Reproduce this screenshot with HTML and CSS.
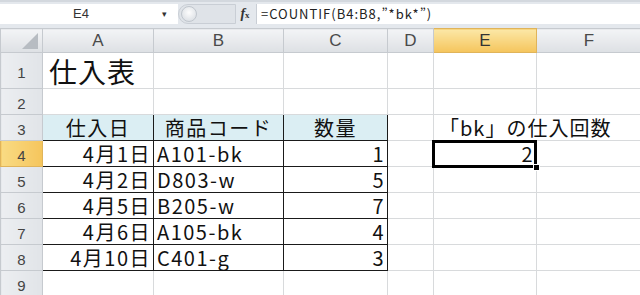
FILE: index.html
```html
<!DOCTYPE html>
<html lang="ja">
<head>
<meta charset="UTF-8" />
<title>仕入表</title>
<link rel="stylesheet" href="styles.css">
</head>
<body>
  <div class="formula-bar">
    <div class="name-box">E4</div>
    <div class="name-arrow">&#9662;</div>
    <div class="capsule"><span class="knob"></span></div>
    <div class="fx"><i>f</i><small>x</small></div>
    <div class="formula">=COUNTIF(B4:B8,”*bk*”)</div>
  </div>

  <table class="sheet">
    <colgroup>
      <col class="c-hd"><col class="c-a"><col class="c-b"><col class="c-c"><col class="c-d"><col class="c-e"><col class="c-f">
    </colgroup>
    <tr class="col-head">
      <th class="corner"><span class="tri"></span></th>
      <th>A</th><th>B</th><th>C</th><th>D</th><th class="active">E</th><th>F</th>
    </tr>
    <tr class="r1">
      <th class="row-head">1</th>
      <td class="title">仕入表</td><td></td><td></td><td></td><td></td><td></td>
    </tr>
    <tr>
      <th class="row-head">2</th>
      <td></td><td></td><td></td><td></td><td></td><td></td>
    </tr>
    <tr>
      <th class="row-head">3</th>
      <td class="box head">仕入日</td><td class="box head">商品コード</td><td class="box head">数量</td>
      <td></td><td class="label" colspan="2">「bk」の仕入回数</td>
    </tr>
    <tr>
      <th class="row-head active">4</th>
      <td class="box num">4月1日</td><td class="box">A101-bk</td><td class="box num">1</td>
      <td></td><td class="num selected">2<span class="frame"></span><span class="handle"></span></td><td></td>
    </tr>
    <tr>
      <th class="row-head">5</th>
      <td class="box num">4月2日</td><td class="box">D803-w</td><td class="box num">5</td>
      <td></td><td></td><td></td>
    </tr>
    <tr>
      <th class="row-head">6</th>
      <td class="box num">4月5日</td><td class="box">B205-w</td><td class="box num">7</td>
      <td></td><td></td><td></td>
    </tr>
    <tr>
      <th class="row-head">7</th>
      <td class="box num">4月6日</td><td class="box">A105-bk</td><td class="box num">4</td>
      <td></td><td></td><td></td>
    </tr>
    <tr>
      <th class="row-head">8</th>
      <td class="box num">4月10日</td><td class="box">C401-g</td><td class="box num">3</td>
      <td></td><td></td><td></td>
    </tr>
    <tr>
      <th class="row-head">9</th>
      <td></td><td></td><td></td><td></td><td></td><td></td>
    </tr>
  </table>
</body>
</html>
```

FILE: styles.css
```css
* {
  box-sizing: border-box;
}
html, body {
  margin: 0;
  padding: 0;
  width: 640px;
  height: 295px;
  overflow: hidden;
  background: #fff;
  font-family: "Noto Sans CJK JP", "Noto Sans", sans-serif;
  color: #111;
}

/* Formula bar */
.formula-bar {
  display: flex;
  align-items: center;
  height: 28px;
  padding: 3px 0 5px 0;
  background: #e4e8ed;
  border-top: 2px solid #d3d8de;
}
.name-box {
  width: 162px;
  height: 20px;
  background: #fff;
  font-family: "Liberation Sans", sans-serif;
  font-size: 13px;
  line-height: 20px;
  color: #333;
  padding-left: 73px;
}
.name-arrow {
  width: 16px;
  height: 20px;
  background: #fff;
  font-size: 9px;
  line-height: 20px;
  color: #333;
}
.capsule {
  display: flex;
  align-items: center;
  width: 58px;
  height: 20px;
  background: #dfe3e8;
  border: 1px solid #c9ced5;
  border-radius: 10px 0 0 10px;
}
.knob {
  width: 16px;
  height: 16px;
  margin-left: 2px;
  border-radius: 50%;
  background: radial-gradient(circle at 50% 40%, #fdfdfd, #d4d9df);
  border: 1px solid #c0c6cd;
}
.fx {
  width: 18px;
  height: 20px;
  font-family: "Liberation Serif", serif;
  font-weight: bold;
  font-size: 14px;
  line-height: 20px;
  color: #333;
  text-align: center;
}
.fx small {
  font-size: 9px;
}
.formula {
  flex: 1;
  height: 20px;
  margin-left: 2px;
  background: #fff;
  border-left: 1px solid #c9ced5;
  font-size: 13px;
  line-height: 20px;
  letter-spacing: 1px;
  padding-left: 4px;
  color: #222;
  white-space: nowrap;
}

/* Sheet */
.sheet {
  border-collapse: collapse;
  table-layout: fixed;
  width: 641px;
}
.c-hd { width: 42px; }
.c-a { width: 111px; }
.c-b { width: 130px; }
.c-c { width: 104px; }
.c-d { width: 46px; }
.c-e { width: 103px; }
.c-f { width: 105px; }

.sheet td, .sheet th {
  border: 1px solid #d8dadc;
  padding: 0 3px;
  white-space: nowrap;
  overflow: visible;
  font-weight: normal;
}
.sheet tr {
  height: 26px;
}
.sheet tr.col-head {
  height: 24px;
}
.sheet tr.r1 {
  height: 36px;
}
.col-head th {
  background: linear-gradient(#f3f4f6, #dde0e4);
  border-color: #c6cacf;
  font-family: "Liberation Sans", sans-serif;
  font-size: 17px;
  color: #4a4a4a;
  text-align: center;
  padding: 0;
}
.col-head th.active {
  background: linear-gradient(#fbe7a6, #f5c55c);
  border-color: #e0b45a;
  color: #333;
}
.corner {
  position: relative;
}
.tri {
  position: absolute;
  right: 4px;
  bottom: 3px;
  width: 0;
  height: 0;
  border-left: 16px solid transparent;
  border-bottom: 16px solid #b7bcc2;
}
.sheet .row-head {
  background: linear-gradient(90deg, #eceef1, #e1e4e8);
  border-color: #c6cacf;
  font-family: "Liberation Sans", sans-serif;
  font-size: 15px;
  color: #444;
  text-align: center;
  padding: 4px 0 0 0;
  vertical-align: middle;
}
.sheet .row-head.active {
  background: linear-gradient(90deg, #f9db84, #f5c55c);
  border-color: #e0b45a;
}

.sheet td {
  font-size: 20px;
  letter-spacing: 1.5px;
  line-height: 22px;
  padding-bottom: 1px;
  vertical-align: bottom;
  color: #111;
}
.sheet td.title {
  font-size: 28px;
  letter-spacing: 1px;
  line-height: 32px;
  padding-left: 6px;
}
.sheet td.box {
  border: 1px solid #1a1a1a;
}
.sheet td.head {
  background: #dbeef3;
  text-align: center;
}
.sheet td.num {
  text-align: right;
  padding-right: 2px;
}
.sheet td.label {
  text-align: left;
  padding-left: 5px;
  letter-spacing: 1px;
}
.sheet td.selected {
  position: relative;
}
.frame {
  position: absolute;
  left: -2px;
  top: -1px;
  right: -1px;
  bottom: -2px;
  border: 3px solid #000;
}
.handle {
  position: absolute;
  right: -4px;
  bottom: -5px;
  width: 7px;
  height: 7px;
  background: #000;
  border: 1px solid #fff;
}
```
